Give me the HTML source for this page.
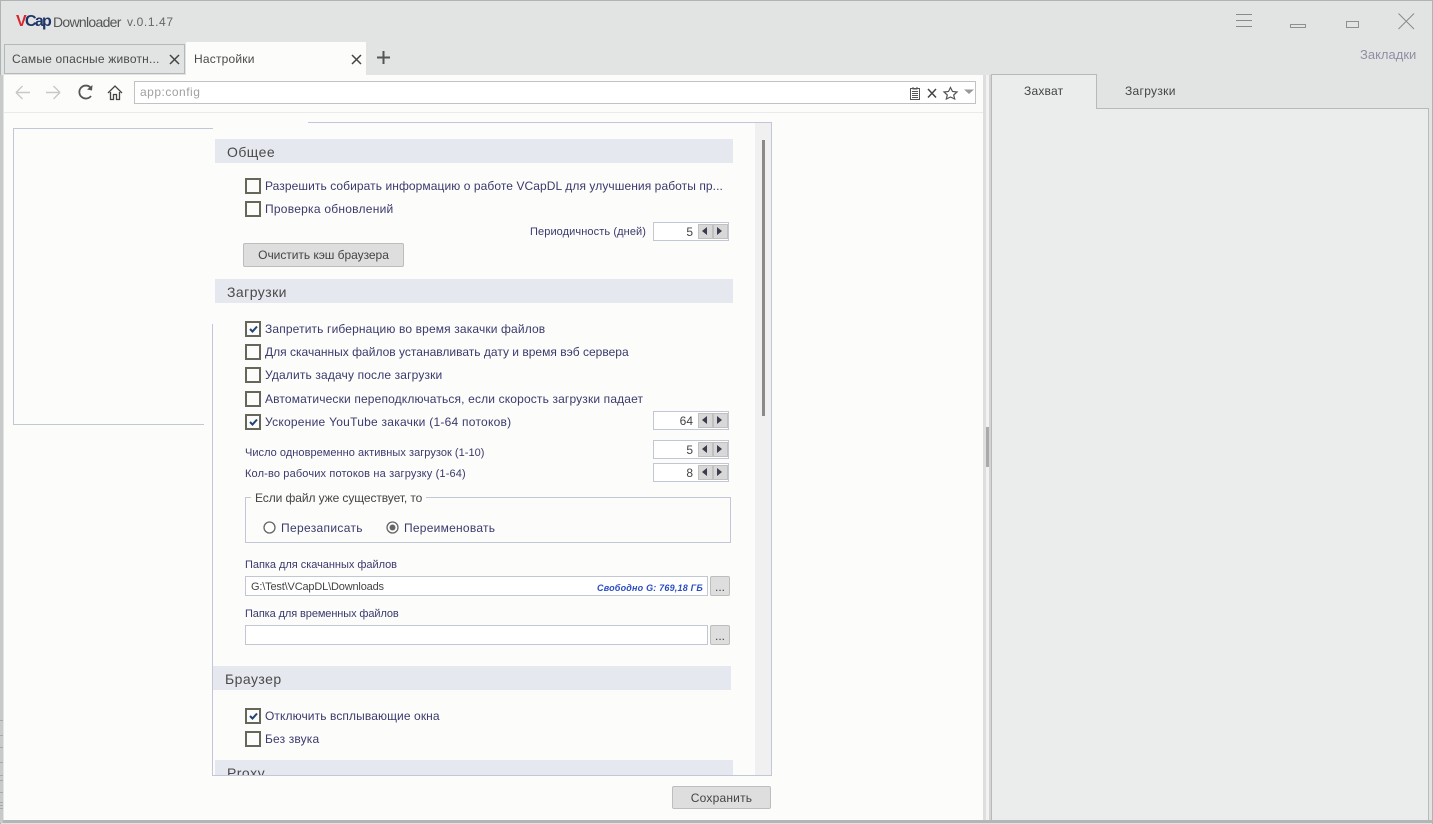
<!DOCTYPE html>
<html lang="ru"><head><meta charset="utf-8"><title>VCap Downloader</title>
<style>
html,body{margin:0;padding:0;width:1433px;height:824px;overflow:hidden;background:#e2e4e3;font-family:"Liberation Sans",sans-serif}
.a{position:absolute;white-space:nowrap}
.l{position:absolute;white-space:nowrap;font-size:12px;line-height:16px;color:#3a3a6e;letter-spacing:.25px}
.s{font-size:11px;letter-spacing:.2px}
.h{position:absolute;height:24px;background:#e5e8ee;font-size:14px;line-height:26px;color:#4a4a4a;padding-left:12px;box-sizing:border-box;width:518px;letter-spacing:.45px}
.c{position:absolute;left:245px;width:16px;height:16px;border:2px solid #66675a;box-sizing:border-box}
.c svg{position:absolute;left:1px;top:1px}
.sp{position:absolute;left:653px;width:76px;height:19px;border:1px solid #c2c7d4;box-sizing:border-box;background:#fff;font-size:12px;line-height:18px;text-align:right;padding-right:35px;color:#444}
.sp i{position:absolute;top:1px;width:15px;height:15px;background:#d8d8d8;border:1px solid #c0c0c0;box-sizing:border-box}
.sp i:after{content:"";position:absolute;top:2px;border:4px solid transparent;border-width:4.5px 5px}
.sp i.p{left:44px}.sp i.p:after{left:-2px;border-right-color:#3c3c4c}
.sp i.n{left:59px}.sp i.n:after{left:3px;border-left-color:#3c3c4c}
.in{position:absolute;background:#fff;border:1px solid #c2c7d4;box-sizing:border-box}
.b{position:absolute;background:#dedede;border:1px solid #bdbdbd;border-radius:2px;box-sizing:border-box;text-align:center;color:#444;font-size:12px}
.t{position:absolute;left:0;width:3px;height:1px;background:#a8aaaa}
</style></head><body>
<!-- window borders -->
<div class="a" style="left:0;top:0;width:1433px;height:1px;background:#b0b3b3"></div>
<div class="a" style="left:0;top:0;width:1px;height:824px;background:#b0b3b3"></div>
<div class="a" style="left:1432px;top:0;width:1px;height:824px;background:#b0b3b3"></div>

<!-- title -->
<div class="a" style="left:16px;top:12px;font-size:16px;line-height:20px;font-weight:bold;letter-spacing:-1.700px"><span style="color:#d8262c">V</span><span style="color:#1e3568">Cap</span></div>
<div class="a" style="left:53px;top:13px;font-size:14px;line-height:18px;color:#555;letter-spacing:-.7px">Downloader</div>
<div class="a" style="left:127px;top:13px;font-size:12px;line-height:18px;color:#666;letter-spacing:.6px">v.0.1.47</div>

<!-- win controls -->
<svg class="a" style="left:1230px;top:10px" width="190" height="24" fill="none" stroke="#8a8a8a">
<path d="M6 4.500H22M6 10.500H22M6 16.500H22"/>
<rect x="60.500" y="14.500" width="15" height="3" stroke="#8f8f8f"/>
<rect x="116.500" y="11.500" width="12" height="6" stroke="#8f8f8f"/>
<path d="M168.500 3.500L184 19M184 3.500L168.500 19" stroke="#8a8a8a"/>
</svg>
<div class="a" style="left:1360px;top:46px;font-size:13px;line-height:18px;color:#8f8fa5">Закладки</div>

<!-- tabs -->
<div class="a" style="left:4px;top:44px;width:181px;height:30px;border:1px solid #b5b8ba;box-sizing:border-box;background:#e2e4e3"></div>
<div class="a" style="left:12px;top:51px;font-size:12px;line-height:16px;color:#4a4a4a;letter-spacing:.2px">Самые опасные животн...</div>
<svg class="a" style="left:169px;top:54px" width="11" height="11" stroke="#444" stroke-width="1.500"><path d="M1 1L10 10M10 1L1 10"/></svg>
<div class="a" style="left:186px;top:42px;width:180px;height:33px;background:#fcfcfa"></div>
<div class="a" style="left:194px;top:51px;font-size:12px;line-height:16px;color:#4a4a4a;letter-spacing:.2px">Настройки</div>
<svg class="a" style="left:351px;top:54px" width="11" height="11" stroke="#444" stroke-width="1.500"><path d="M1 1L10 10M10 1L1 10"/></svg>
<svg class="a" style="left:377px;top:51px" width="13" height="13" stroke="#555" stroke-width="2"><path d="M6.500 0V13M0 6.500H13"/></svg>

<!-- left main area -->
<div class="a" style="left:4px;top:75px;width:979px;height:745px;background:#fcfcfa"></div>
<div class="a" style="left:4px;top:112px;width:979px;height:1px;background:#eaeaea"></div>

<!-- toolbar icons -->
<svg class="a" style="left:14px;top:83px" width="112" height="20" fill="none">
<path d="M2 9.500H16M2 9.500L8.500 3M2 9.500L8.500 16" stroke="#c8c8c8" stroke-width="1.400"/>
<path d="M32 9.500H46M46 9.500L39.500 3M46 9.500L39.500 16" stroke="#c8c8c8" stroke-width="1.400"/>
<path d="M76.500 4.500A6.500 6.500 0 1 0 77 13" stroke="#555" stroke-width="1.800"/>
<path d="M73 6.500L78 7.500L78.500 2Z" fill="#555"/>
<path d="M94 10L101 3L108 10M96.500 9V16.500H99.500V11.500H102.500V16.500H105.500V9" stroke="#444" stroke-width="1.300"/>
</svg>
<div class="in" style="left:134px;top:81px;width:842px;height:23px;border-color:#c0c2c4"></div>
<div class="a" style="left:140px;top:84px;font-size:12px;line-height:16px;color:#a0a0a0;letter-spacing:.5px">app:config</div>
<svg class="a" style="left:908px;top:86px" width="68" height="14" fill="none">
<path d="M2.500 2.500H11.500V13.500H2.500ZM4 5.500H10M4 7.500H10M4 9.500H10M4 11.500H10M5 1V3H9V1" stroke="#555"/>
<path d="M20 3L28 11.500M28 3L20 11.500" stroke="#444" stroke-width="1.500"/>
<path d="M42.500 1.500L44.500 5.500L49 6L45.700 9L46.700 13L42.500 11L38.300 13L39.300 9L36 6L40.500 5.500Z" stroke="#555" stroke-width="1.200"/>
<path d="M56 3.500H66L61 8Z" fill="#999"/>
</svg>

<!-- left frame fragments -->
<div class="a" style="left:13px;top:128px;width:200px;height:1px;background:#c2c7d8"></div>
<div class="a" style="left:13px;top:128px;width:1px;height:297px;background:#c2c7d8"></div>
<div class="a" style="left:13px;top:424px;width:191px;height:1px;background:#c2c7d8"></div>

<!-- settings frame -->
<div class="a" style="left:308px;top:122px;width:464px;height:1px;background:#c2c7d8"></div>
<div class="a" style="left:771px;top:122px;width:1px;height:654px;background:#c2c7d8"></div>
<div class="a" style="left:213px;top:775px;width:559px;height:1px;background:#c2c7d8"></div>
<div class="a" style="left:212px;top:324px;width:1px;height:452px;background:#c2c7d8"></div>
<div class="a" style="left:755px;top:123px;width:16px;height:652px;background:#f0f0f0"></div>
<div class="a" style="left:762px;top:140px;width:3px;height:276px;background:#8a8a8a"></div>

<!-- Общее -->
<div class="h" style="left:215px;top:139px">Общее</div>
<div class="c" style="top:178px"></div>
<div class="l" style="left:265px;top:178px;letter-spacing:.08px">Разрешить собирать информацию о работе VCapDL для улучшения работы пр...</div>
<div class="c" style="top:201px"></div>
<div class="l" style="left:265px;top:201px">Проверка обновлений</div>
<div class="l s" style="left:530px;top:224px;letter-spacing:.1px">Периодичность (дней)</div>
<div class="sp" style="top:222px">5<i class="p"></i><i class="n"></i></div>
<div class="b" style="left:243px;top:243px;width:161px;height:24px;line-height:22px;letter-spacing:-.04px">Очистить кэш браузера</div>

<!-- Загрузки -->
<div class="h" style="left:215px;top:279px">Загрузки</div>
<div class="c" style="top:321px"><svg width="12" height="12" fill="none" stroke="#1f4478" stroke-width="2"><path d="M2 5L4.500 7.500L9 2.500"/></svg></div>
<div class="l" style="left:265px;top:321px;letter-spacing:.14px">Запретить гибернацию во время закачки файлов</div>
<div class="c" style="top:344px"></div>
<div class="l" style="left:265px;top:344px;letter-spacing:.01px">Для скачанных файлов устанавливать дату и время вэб сервера</div>
<div class="c" style="top:367px"></div>
<div class="l" style="left:265px;top:367px;letter-spacing:.15px">Удалить задачу после загрузки</div>
<div class="c" style="top:391px"></div>
<div class="l" style="left:265px;top:391px;letter-spacing:.15px">Автоматически переподключаться, если скорость загрузки падает</div>
<div class="c" style="top:414px"><svg width="12" height="12" fill="none" stroke="#1f4478" stroke-width="2"><path d="M2 5L4.500 7.500L9 2.500"/></svg></div>
<div class="l" style="left:265px;top:414px">Ускорение YouTube закачки (1-64 потоков)</div>
<div class="sp" style="top:411px">64<i class="p"></i><i class="n"></i></div>
<div class="l s" style="left:245px;top:445px;letter-spacing:.04px">Число одновременно активных загрузок (1-10)</div>
<div class="sp" style="top:440px">5<i class="p"></i><i class="n"></i></div>
<div class="l s" style="left:245px;top:466px;letter-spacing:.15px">Кол-во рабочих потоков на загрузку (1-64)</div>
<div class="sp" style="top:463px">8<i class="p"></i><i class="n"></i></div>

<!-- group -->
<div class="a" style="left:245px;top:497px;width:486px;height:46px;border:1px solid #c2c7d4;box-sizing:border-box"></div>
<div class="a" style="left:251px;top:490px;background:#fcfcfa;padding:0 4px;font-size:12px;line-height:16px;color:#444;letter-spacing:-.09px">Если файл уже существует, то</div>
<svg class="a" style="left:262px;top:520px" width="140" height="16"><circle cx="7.500" cy="7.500" r="5.500" fill="#fff" stroke="#666" stroke-width="1.300"/><circle cx="130.500" cy="7.500" r="5.500" fill="#fff" stroke="#666" stroke-width="1.300"/><circle cx="130.500" cy="7.500" r="3" fill="#666"/></svg>
<div class="l" style="left:281px;top:520px;letter-spacing:.33px">Перезаписать</div>
<div class="l" style="left:404px;top:520px">Переименовать</div>

<div class="l s" style="left:245px;top:557px;letter-spacing:-.03px">Папка для скачанных файлов</div>
<div class="in" style="left:245px;top:576px;width:463px;height:20px"></div>
<div class="a" style="left:251px;top:579px;font-size:11px;line-height:16px;color:#444;letter-spacing:-.17px">G:\Test\VCapDL\Downloads</div>
<div class="a" style="left:597px;top:581px;font-size:9px;line-height:14px;font-style:italic;font-weight:bold;color:#2a4cc0;letter-spacing:.2px">Свободно G: 769,18 ГБ</div>
<div class="b" style="left:710px;top:576px;width:20px;height:20px;line-height:20px">...</div>
<div class="l s" style="left:245px;top:606px;letter-spacing:-.1px">Папка для временных файлов</div>
<div class="in" style="left:245px;top:625px;width:463px;height:20px"></div>
<div class="b" style="left:710px;top:625px;width:20px;height:20px;line-height:20px">...</div>

<!-- Браузер -->
<div class="h" style="left:213px;top:666px">Браузер</div>
<div class="c" style="top:708px"><svg width="12" height="12" fill="none" stroke="#1f4478" stroke-width="2"><path d="M2 5L4.500 7.500L9 2.500"/></svg></div>
<div class="l" style="left:265px;top:708px;letter-spacing:.1px">Отключить всплывающие окна</div>
<div class="c" style="top:731px"></div>
<div class="l" style="left:265px;top:731px;letter-spacing:.15px">Без звука</div>

<!-- Proxy -->
<div class="h" style="left:215px;top:760px;height:15px;overflow:hidden">Proxy</div>

<div class="b" style="left:672px;top:786px;width:99px;height:23px;line-height:22px;letter-spacing:.2px">Сохранить</div>

<!-- splitter -->
<div class="a" style="left:983px;top:75px;width:3px;height:745px;background:#dedede"></div>
<div class="a" style="left:986px;top:75px;width:3px;height:745px;background:#f2f2f2"></div>
<div class="a" style="left:989px;top:75px;width:2px;height:745px;background:#d4d4d4"></div>
<div class="a" style="left:986px;top:427px;width:3px;height:40px;background:#aaa"></div>

<!-- right panel -->
<div class="a" style="left:991px;top:108px;width:438px;height:712px;background:#ebedec;border:1px solid #b8baba;border-bottom:0;box-sizing:border-box"></div>
<div class="a" style="left:991px;top:74px;width:106px;height:35px;background:#ebedec;border:1px solid #b8baba;border-bottom:0;box-sizing:border-box"></div>
<div class="a" style="left:1024px;top:83px;font-size:12px;line-height:16px;color:#444;letter-spacing:.2px">Захват</div>
<div class="a" style="left:1125px;top:83px;font-size:12px;line-height:16px;color:#444;letter-spacing:.3px">Загрузки</div>

<!-- bottom border -->
<div class="a" style="left:0;top:820px;width:1433px;height:3px;background:#b4b6b6"></div>
<div class="a" style="left:0;top:75px;width:3px;height:748px;background:#c8cac9"></div>
<div class="t" style="top:720px"></div><div class="t" style="top:735px"></div><div class="t" style="top:747px"></div><div class="t" style="top:762px"></div><div class="t" style="top:775px"></div><div class="t" style="top:780px"></div><div class="t" style="top:792px"></div><div class="t" style="top:802px"></div><div class="t" style="top:805px"></div><div class="t" style="top:808px"></div>
</body></html>
